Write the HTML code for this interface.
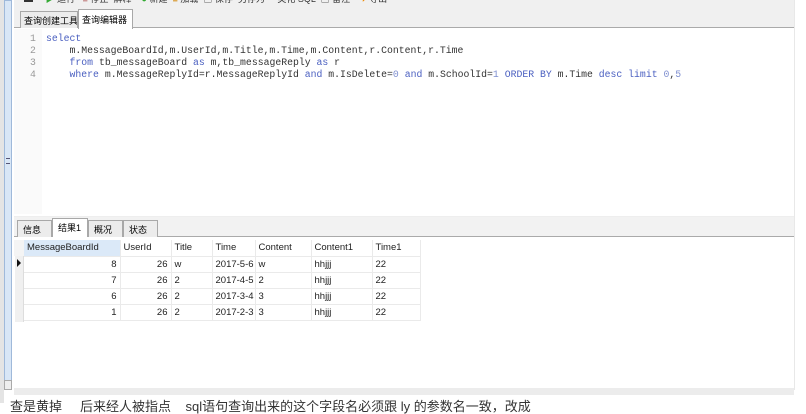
<!DOCTYPE html>
<html><head><meta charset="utf-8"><style>
*{margin:0;padding:0;box-sizing:border-box}
body{width:806px;height:403px;overflow:hidden;background:#fff;position:relative;font-family:"Liberation Sans","Noto Sans CJK SC",sans-serif;}
.abs{position:absolute}
.code{font-family:"Liberation Mono",monospace;font-size:9.8px;color:#333;white-space:pre;}
.kw{color:#4a5fc0}
.num{color:#7f8fd0}
.cj{font-size:9px;color:#222}
.tab{position:absolute;border:1px solid #a8a8a8;border-bottom:none;background:#ececec;font-size:9px;padding:2px 0 0 3px;height:17px;white-space:nowrap;overflow:hidden}
.grid{position:absolute;left:24px;top:240px;border-collapse:collapse;font-size:9.5px;color:#222;table-layout:fixed}
.grid td{height:16px;padding:0 3px;border-right:1px solid #eaeaea;border-bottom:1px solid #eaeaea;white-space:nowrap;overflow:hidden}
.r{text-align:right}
</style></head><body>
<div class="abs" style="left:0;top:0;width:4px;height:403px;background:#e4e4e4"></div>
<div class="abs" style="left:4px;top:0;width:8px;height:383px;background:#d8e6f6;border:1px solid #9fb9da"></div>
<div class="abs" style="left:4px;top:380px;width:8px;height:10px;background:#eee;border:1px solid #aaa"></div>
<div class="abs" style="left:6px;top:158px;width:4px;height:6px;border-top:1px solid #557;border-bottom:1px solid #557"></div>
<div class="abs" style="left:14px;top:0;width:780px;height:8px;background:#f0f0f0;overflow:hidden">
<div class="abs cj" style="left:10px;top:-8px;color:#333;font-size:9px;white-space:nowrap">▬ &nbsp;&nbsp;&nbsp;&nbsp;<span style="color:#3a3">▶</span> 运行 &nbsp;&nbsp;<span style="color:#c99">■</span> 停止 &nbsp;解释 &nbsp;&nbsp;&nbsp;<span style="color:#3a3">●</span> 新建 &nbsp;<span style="color:#da5">■</span> 加载 &nbsp;▣ 保存 &nbsp;另存为 &nbsp;&nbsp;&nbsp;&nbsp;美化 SQL &nbsp;▣ 备注 &nbsp;&nbsp;<span style="color:#e80">➡</span> 导出</div></div>
<div class="abs" style="left:14px;top:8px;width:780px;height:20px;background:#f0f0f0;border-bottom:1px solid #aaa"></div>
<div class="tab" style="left:20px;top:11px;width:58px;height:17px">查询创建工具</div>
<div class="tab" style="left:78px;top:9px;width:55px;height:20px;background:#fff;padding-top:3px">查询编辑器</div>
<div class="abs" style="left:14px;top:29px;width:28px;height:185px;background:#fafafa"></div>
<div class="abs code" style="left:30px;top:33px;color:#999;line-height:12px">1
2
3
4</div>
<div class="abs code" style="left:46px;top:33px;line-height:12px"><span class="kw">select</span>
    m.MessageBoardId,m.UserId,m.Title,m.Time,m.Content,r.Content,r.Time
    <span class="kw">from</span> tb_messageBoard <span class="kw">as</span> m,tb_messageReply <span class="kw">as</span> r
    <span class="kw">where</span> m.MessageReplyId=r.MessageReplyId <span class="kw">and</span> m.IsDelete=<span class="num">0</span> <span class="kw">and</span> m.SchoolId=<span class="num">1</span> <span class="kw">ORDER BY</span> m.Time <span class="kw">desc limit</span> <span class="num">0</span>,<span class="num">5</span></div>
<div class="abs" style="left:14px;top:216px;width:780px;height:21px;background:#f2f2f2;border-bottom:1px solid #aaa;border-top:1px solid #eee"></div>
<div class="tab" style="left:17px;top:220px;width:35px;padding-left:5px">信息</div>
<div class="tab" style="left:52px;top:218px;width:36px;height:19px;background:#fff;padding-left:5px">结果1</div>
<div class="tab" style="left:88px;top:220px;width:35px;padding-left:5px">概况</div>
<div class="tab" style="left:123px;top:220px;width:35px;padding-left:5px">状态</div>
<table class="grid" style="width:396px">
<colgroup><col style="width:96px"><col style="width:51px"><col style="width:41px"><col style="width:43px"><col style="width:56px"><col style="width:61px"><col style="width:48px"></colgroup>
<tr><td style="background:#dbe9f8">MessageBoardId</td><td>UserId</td><td>Title</td><td>Time</td><td>Content</td><td>Content1</td><td>Time1</td></tr>
<tr><td class="r">8</td><td class="r">26</td><td>w</td><td>2017-5-6</td><td>w</td><td>hhjjj</td><td>22</td></tr>
<tr><td class="r">7</td><td class="r">26</td><td>2</td><td>2017-4-5</td><td>2</td><td>hhjjj</td><td>22</td></tr>
<tr><td class="r">6</td><td class="r">26</td><td>2</td><td>2017-3-4</td><td>3</td><td>hhjjj</td><td>22</td></tr>
<tr><td class="r">1</td><td class="r">26</td><td>2</td><td>2017-2-3</td><td>3</td><td>hhjjj</td><td>22</td></tr>
</table>
<div class="abs" style="left:15px;top:256px;width:9px;height:66px;background:#f0f0f0;border-right:1px solid #ddd"></div>
<div class="abs" style="left:17px;top:259px;width:0;height:0;border-left:4px solid #111;border-top:4px solid transparent;border-bottom:4px solid transparent"></div>
<div class="abs" style="left:14px;top:240px;width:10px;height:16px;background:#f4f4f4"></div>
<div class="abs" style="left:794px;top:0;width:1px;height:390px;background:#e8e8e8"></div>
<div class="abs" style="left:14px;top:388px;width:780px;height:7px;background:#ececec"></div>
<div class="abs" style="left:10px;top:400px;font-size:13px;color:#333;white-space:nowrap;line-height:13px">查是黄掉 &nbsp;&nbsp;&nbsp;&nbsp;后来经人被指点 &nbsp;&nbsp;&nbsp;sql语句查询出来的这个字段名必须跟 ly 的参数名一致，改成</div>
</body></html>
